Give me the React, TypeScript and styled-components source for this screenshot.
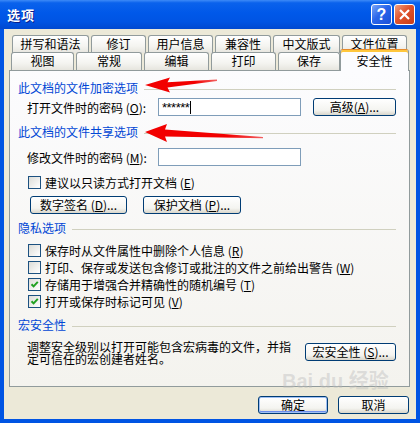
import styled, { createGlobalStyle } from 'styled-components';

const GlobalStyle = createGlobalStyle`
  html, body {
    margin: 0;
    padding: 0;
    background: #fff;
  }
  body {
    font-family: "Noto Sans CJK SC", "Liberation Sans", sans-serif;
    font-size: 12px;
    color: #000;
  }
`;

const backTabs: [string, number][] = [
  ['拼写和语法', 77],
  ['修订', 55],
  ['用户信息', 65],
  ['兼容性', 56],
  ['中文版式', 67],
  ['文件位置', 65],
];

const frontTabs: [string, number][] = [
  ['视图', 63],
  ['常规', 66],
  ['编辑', 65],
  ['打印', 65],
  ['保存', 62],
];

const privacyChecks = [
  { text: '保存时从文件属性中删除个人信息', key: 'R', checked: false },
  { text: '打印、保存或发送包含修订或批注的文件之前给出警告', key: 'W', checked: false },
  { text: '存储用于增强合并精确性的随机编号', key: 'T', checked: true },
  { text: '打开或保存时标记可见', key: 'V', checked: true },
];

const App = () => {
  return (
    <>
      <GlobalStyle />
      <Window>
        <TitleBar>
          <Title>选项</Title>
          <Caption>
            <HelpButton>?</HelpButton>
            <CloseButton>
              <svg width='13' height='13' viewBox='0 0 13 13'>
                <path d='M2 2 L11 11 M11 2 L2 11' stroke='#fff' strokeWidth='2.2' />
              </svg>
            </CloseButton>
          </Caption>
        </TitleBar>

        <Frame>
          <TabStrip>
            <TabRow $indent={8} $height={17}>
              {backTabs.map(([label, width]) => (
                <Tab key={label} $width={width}>
                  {label}
                </Tab>
              ))}
            </TabRow>
            <TabRow $indent={7} $height={18}>
              {frontTabs.map(([label, width]) => (
                <Tab key={label} $width={width}>
                  {label}
                </Tab>
              ))}
              <Tab $width={69} $active>
                安全性
              </Tab>
            </TabRow>
          </TabStrip>

          <Panel>
            <GroupHeader>
              <span>此文档的文件加密选项</span>
              <Rule />
            </GroupHeader>
            <FieldRow $gap={3}>
              <FieldLabel>
                打开文件时的密码 (<u>O</u>):
              </FieldLabel>
              <TextBox>
                ******
                <Caret />
              </TextBox>
              <PushButton $width={83} style={{ marginLeft: 12 }}>
                高级(<u>A</u>)...
              </PushButton>
            </FieldRow>

            <GroupHeader $gap={9}>
              <span>此文档的文件共享选项</span>
              <Rule />
            </GroupHeader>
            <FieldRow $gap={9}>
              <FieldLabel>
                修改文件时的密码 (<u>M</u>):
              </FieldLabel>
              <TextBox />
            </FieldRow>
            <CheckRow $gap={9} $height={14}>
              <CheckBox />
              <span>
                建议以只读方式打开文档 (<u>E</u>)
              </span>
            </CheckRow>
            <ButtonRow>
              <PushButton $width={97}>
                数字签名 (<u>D</u>)...
              </PushButton>
              <PushButton $width={98}>
                保护文档 (<u>P</u>)...
              </PushButton>
            </ButtonRow>

            <GroupHeader $gap={7}>
              <span>隐私选项</span>
              <Rule />
            </GroupHeader>
            <CheckList>
              {privacyChecks.map((item) => (
                <CheckRow key={item.key} $height={17}>
                  <CheckBox>
                    {item.checked && (
                      <svg width='11' height='11' viewBox='0 0 11 11'>
                        <path
                          d='M2.5 5.2 L4.6 7.4 L8.8 2.9'
                          stroke='#21A121'
                          strokeWidth='2'
                          fill='none'
                        />
                      </svg>
                    )}
                  </CheckBox>
                  <span>
                    {item.text} (<u>{item.key}</u>)
                  </span>
                </CheckRow>
              ))}
            </CheckList>

            <GroupHeader $gap={8}>
              <span>宏安全性</span>
              <Rule />
            </GroupHeader>
            <MacroRow>
              <MacroText>
                调整安全级别以打开可能包含宏病毒的文件，并指定可信任的宏创建者姓名。
              </MacroText>
              <PushButton $width={91} style={{ marginTop: 2 }}>
                宏安全性 (<u>S</u>)...
              </PushButton>
            </MacroRow>
          </Panel>

          <Footer>
            <PushButton $width={70} $default>
              确定
            </PushButton>
            <PushButton $width={71}>取消</PushButton>
          </Footer>
        </Frame>

        <Arrows width='420' height='423' viewBox='0 0 420 423'>
          <defs>
            <linearGradient id='fade' x1='0' x2='1' y1='0' y2='0'>
              <stop offset='0' stopColor='#F20000' />
              <stop offset='0.7' stopColor='#F20000' />
              <stop offset='1' stopColor='#F26060' />
            </linearGradient>
          </defs>
          <polygon
            points='145,85 170,77.5 167.5,82.3 217,79.5 217,81 167.5,87.6 170,92.5'
            fill='url(#fade)'
          />
          <polygon
            points='145,132 167,124 165,129.6 263,137 263,138.2 165,136.6 167,142'
            fill='url(#fade)'
          />
        </Arrows>

        <Watermark>Bai du 经验</Watermark>
      </Window>
    </>
  );
};

const Window = styled.div`
  position: relative;
  width: 420px;
  height: 423px;
  overflow: hidden;
  display: flex;
  flex-direction: column;
`;

const TitleBar = styled.div`
  height: 29px;
  flex: none;
  display: flex;
  align-items: center;
  justify-content: space-between;
  padding: 0 5px 0 7px;
  background: linear-gradient(
    #3d8af7 0%,
    #0a62ec 10%,
    #0058e9 45%,
    #0054e3 75%,
    #0049d0 100%
  );
`;

const Title = styled.div`
  color: #fff;
  font-size: 13px;
  font-weight: bold;
  letter-spacing: 1px;
  text-shadow: 1px 1px #0a1e8a;
`;

const Caption = styled.div`
  display: flex;
  gap: 2px;
`;

const CaptionButton = styled.div`
  width: 21px;
  height: 21px;
  box-sizing: border-box;
  border: 1px solid #fff;
  border-radius: 3px;
  display: flex;
  align-items: center;
  justify-content: center;
  color: #fff;
`;

const HelpButton = styled(CaptionButton)`
  background: linear-gradient(135deg, #7aa6f8 0%, #2a66ea 45%, #1c4fd8 100%);
  font-family: "Liberation Sans", sans-serif;
  font-weight: bold;
  font-size: 16px;
`;

const CloseButton = styled(CaptionButton)`
  background: linear-gradient(135deg, #f0a080 0%, #e0532c 45%, #c83d18 100%);
`;

const Frame = styled.div`
  flex: 1;
  display: flex;
  flex-direction: column;
  background: #ece9d8;
  border: 4px solid #0054e3;
  border-top: none;
  padding-top: 6px;
`;

const TabStrip = styled.div`
  display: flex;
  flex-direction: column;
`;

const TabRow = styled.div<{ $indent: number; $height: number }>`
  display: flex;
  align-items: flex-start;
  gap: 2px;
  height: ${(p) => p.$height}px;
  padding-left: ${(p) => p.$indent}px;
`;

const Tab = styled.div<{ $width: number; $active?: boolean }>`
  position: relative;
  width: ${(p) => p.$width}px;
  height: ${(p) => (p.$active ? 22 : 18)}px;
  flex: none;
  box-sizing: border-box;
  border: 1px solid #919b9c;
  border-bottom: none;
  border-radius: 3px 3px 0 0;
  padding-top: ${(p) => (p.$active ? 4 : 1)}px;
  line-height: 14px;
  text-align: center;
  background: linear-gradient(#ffffff, #f4f4f0 60%, #e6e5de);
  ${(p) =>
    p.$active &&
    `
    z-index: 1;
    margin-top: -3px;
    margin-left: -2px;
    border-top: 1px solid #e68b2c;
    box-shadow: inset 0 2px #ffc73c;
    background: #fcfcfe;
  `}
`;

const Panel = styled.div`
  margin-left: 5px;
  width: 401px;
  height: 317px;
  box-sizing: border-box;
  border: 1px solid #919b9c;
  background: linear-gradient(#fcfcfe, #f4f3ee);
  padding: 10px 13px 0 8px;
  display: flex;
  flex-direction: column;
`;

const GroupHeader = styled.div<{ $gap?: number }>`
  display: flex;
  align-items: center;
  height: 14px;
  line-height: 14px;
  margin-top: ${(p) => p.$gap ?? 0}px;
  color: #0046d5;
`;

const Rule = styled.div`
  flex: 1;
  height: 1px;
  margin: 3px 0 0 6px;
  background: #d0d0bf;
`;

const FieldRow = styled.div<{ $gap: number }>`
  display: flex;
  align-items: center;
  height: 18px;
  margin-top: ${(p) => p.$gap}px;
  padding-left: 9px;
`;

const FieldLabel = styled.div`
  width: 131px;
  flex: none;
`;

const TextBox = styled.div`
  width: 143px;
  height: 18px;
  box-sizing: border-box;
  border: 1px solid #7f9db9;
  background: #fff;
  padding: 0 3px;
  display: flex;
  align-items: center;
  font-family: "Liberation Sans", sans-serif;
  font-size: 13px;
  letter-spacing: -0.5px;
  line-height: 1;
`;

const Caret = styled.span`
  width: 1px;
  height: 13px;
  margin-left: 1px;
  background: #000;
`;

const PushButton = styled.button<{ $width: number; $default?: boolean }>`
  width: ${(p) => p.$width}px;
  height: 18px;
  flex: none;
  box-sizing: border-box;
  padding: 0;
  border: 1px solid #003c74;
  border-radius: 3px;
  background: linear-gradient(#ffffff, #f4f4f0 70%, #d9d6cb);
  font-family: inherit;
  font-size: 12px;
  line-height: 14px;
  color: #000;
  ${(p) =>
    p.$default &&
    `
    box-shadow: inset 0 0 0 1px #9fc0f4, inset 0 -1px 0 1px #6b8ded;
  `}
`;

const CheckRow = styled.label<{ $gap?: number; $height: number }>`
  display: flex;
  align-items: center;
  height: ${(p) => p.$height}px;
  margin-top: ${(p) => p.$gap ?? 0}px;
  padding-left: 10px;
  gap: 4px;
`;

const CheckBox = styled.span`
  width: 13px;
  height: 13px;
  flex: none;
  box-sizing: border-box;
  border: 1px solid #1c5180;
  background: linear-gradient(135deg, #dcdcd7, #ffffff);
  display: flex;
  align-items: center;
  justify-content: center;
`;

const ButtonRow = styled.div`
  display: flex;
  gap: 16px;
  margin-top: 7px;
  padding-left: 12px;
`;

const CheckList = styled.div`
  display: flex;
  flex-direction: column;
  margin-top: 7px;
`;

const MacroRow = styled.div`
  display: flex;
  align-items: flex-start;
  margin-top: 9px;
  padding-left: 9px;
`;

const MacroText = styled.p`
  width: 270px;
  margin: 0 8px 0 0;
  line-height: 12px;
`;

const Footer = styled.div`
  display: flex;
  justify-content: flex-end;
  gap: 10px;
  margin-top: 9px;
  padding-right: 7px;
`;

const Arrows = styled.svg`
  position: absolute;
  left: 0;
  top: 0;
  pointer-events: none;
`;

const Watermark = styled.div`
  position: absolute;
  left: 282px;
  top: 370px;
  pointer-events: none;
  color: rgba(190, 190, 190, 0.45);
  font-family: "Liberation Sans", "Noto Sans CJK SC", sans-serif;
  font-weight: bold;
  font-size: 20px;
  line-height: 22px;
`;

export default App;
